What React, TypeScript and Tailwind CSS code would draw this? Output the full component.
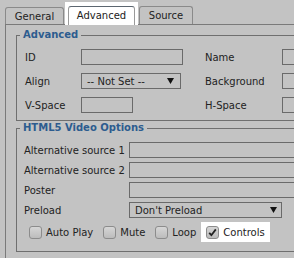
import React from "react";

function Arrow() {
  return (
    <svg width="7" height="6" viewBox="0 0 7 6" className="shrink-0">
      <path d="M0 0 H7 L3.5 6 Z" fill="#111" />
    </svg>
  );
}

function Check({ label, checked = false }: { label: string; checked?: boolean }) {
  return (
    <label className={`flex items-center gap-[4px] h-[20px] px-[5px] ${checked ? "bg-white" : ""}`}>
      <span className="w-[13px] h-[13px] rounded-[3px] border border-[#8c8c8c] bg-gradient-to-b from-[#d6d6d6] to-[#bcbcbc] flex items-center justify-center">
        {checked && (
          <svg width="9" height="9" viewBox="0 0 9 9">
            <path d="M1.2 4.8 L3.4 7.2 L7.8 1.4" stroke="#222" strokeWidth="1.8" fill="none" />
          </svg>
        )}
      </span>
      <span>{label}</span>
    </label>
  );
}

export default function App() {
  const box = "h-[16px] border border-[#6a6a6a]";

  return (
    <div className="w-[294px] h-[258px] overflow-hidden bg-[#c3c3c3] font-['DejaVu_Sans',sans-serif] text-[10px] text-[#222]">
      {/* Tabs */}
      <div className="flex items-end h-[25px] pl-[5px] relative z-10">
        <div className="w-[59px] h-[17px] mb-px border border-b-0 border-[#8a8a8a] rounded-t-[3px] flex items-center justify-center">
          General
        </div>
        <div className="w-[73px] h-[23px] ml-px bg-white pt-[4px] px-[3px]">
          <div className="h-full border border-b-0 border-[#9a9a9a] border-t-[#5c6670] rounded-t-[3px] flex items-center justify-center pb-px">
            Advanced
          </div>
        </div>
        <div className="w-[54px] h-[18px] ml-px mb-px border border-b-0 border-[#8a8a8a] rounded-t-[3px] flex items-center justify-center">
          Source
        </div>
      </div>

      {/* Panel */}
      <div className="ml-[5px] -mt-px w-[420px] h-[240px] border-l border-t border-[#7a7a7a] pl-[10px] pt-[3px]">
        <fieldset className="border border-[#6f6f6f] pl-[8px] pt-[7px] pb-[7px]">
          <legend className="-ml-[5px] px-[3px] leading-[14px] font-bold text-[#2d5c8f]">Advanced</legend>
          <div className="grid grid-cols-[56px_124px_77px_1fr] gap-y-[8px] items-center">
            <span>ID</span>
            <div className={`${box} w-[102px]`} />
            <span>Name</span>
            <div className={`${box} w-[60px]`} />

            <span>Align</span>
            <div className={`${box} w-[100px] flex items-center justify-between pl-[5px] pr-[6px]`}>
              <span>-- Not Set --</span>
              <Arrow />
            </div>
            <span>Background</span>
            <div className={`${box} w-[60px]`} />

            <span>V-Space</span>
            <div className={`${box} w-[52px]`} />
            <span>H-Space</span>
            <div className={`${box} w-[60px]`} />
          </div>
        </fieldset>

        <fieldset className="border border-[#6f6f6f] pl-[7px] pt-[7px] pb-[9px]">
          <legend className="-ml-[4px] px-[3px] leading-[14px] font-bold text-[#2d5c8f]">HTML5 Video Options</legend>
          <div className="grid grid-cols-[105px_1fr] gap-y-[4px] items-center">
            <span>Alternative source 1</span>
            <div className={box} />
            <span>Alternative source 2</span>
            <div className={box} />
            <span>Poster</span>
            <div className={box} />
            <span>Preload</span>
            <div className={`${box} w-[153px] flex items-center justify-between pl-[5px] pr-[4px]`}>
              <span>Don't Preload</span>
              <Arrow />
            </div>
          </div>
          <div className="flex items-center mt-[4px]">
            <Check label="Auto Play" />
            <Check label="Mute" />
            <Check label="Loop" />
            <Check label="Controls" checked />
          </div>
        </fieldset>
      </div>
    </div>
  );
}
